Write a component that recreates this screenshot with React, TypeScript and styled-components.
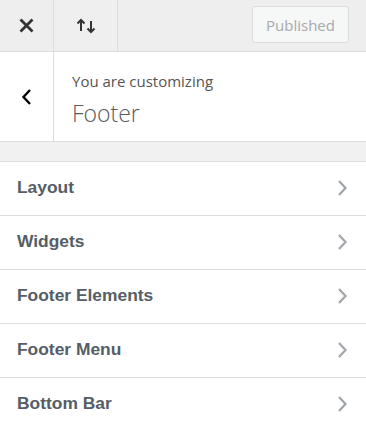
import React from 'react';
import styled, { createGlobalStyle } from 'styled-components';

const GlobalStyle = createGlobalStyle`
  html, body {
    margin: 0;
    padding: 0;
    background: #fff;
  }
  * { box-sizing: border-box; }
`;

const Panel = styled.div`
  width: 366px;
  min-height: 426px;
  background: #fff;
  font-family: 'Open Sans', 'Noto Sans', sans-serif;
`;

const TopBar = styled.div`
  display: flex;
  align-items: stretch;
  height: 52px;
  background: #eeeeee;
  border-bottom: 1px solid #dddddd;
`;

const IconButton = styled.button<{ $width: number; $shade?: boolean }>`
  width: ${(p) => p.$width}px;
  border: none;
  border-right: 1px solid #dddddd;
  background: ${(p) => (p.$shade ? '#efefef' : 'transparent')};
  padding: 0;
  display: flex;
  align-items: center;
  justify-content: center;
  color: #333;
  cursor: pointer;
`;

const Spacer = styled.div`
  flex: 1;
`;

const PublishButton = styled.button`
  align-self: center;
  margin-right: 17px;
  margin-top: -2px;
  width: 97px;
  height: 37px;
  border: 1px solid #dcdcde;
  border-radius: 3px;
  background: #f6f7f7;
  color: #a7aaad;
  font-family: 'Open Sans', 'Noto Sans', sans-serif;
  font-size: 15px;
  padding: 0;
`;

const Header = styled.div`
  display: flex;
  height: 90px;
  border-bottom: 1px solid #dddddd;
`;

const BackButton = styled.button`
  width: 54px;
  border: none;
  border-right: 1px solid #dddddd;
  background: #fff;
  display: flex;
  align-items: center;
  justify-content: center;
  padding: 0;
  color: #000;
`;

const HeaderText = styled.div`
  display: flex;
  flex-direction: column;
  justify-content: center;
  padding: 5px 0 0 18px;
  gap: 7px;
`;

const Label = styled.span`
  font-size: 15px;
  color: #555;
  line-height: 20px;
`;

const Title = styled.span`
  font-size: 23px;
  font-weight: 300;
  color: #5a5a5a;
  line-height: 30px;
`;

const Gap = styled.div`
  height: 20px;
  background: #f1f1f1;
  border-bottom: 1px solid #dddddd;
`;

const List = styled.ul`
  list-style: none;
  margin: 0;
  padding: 0;
`;

const Item = styled.li`
  display: flex;
  align-items: center;
  justify-content: space-between;
  height: 54px;
  padding: 0 18px 2px 17px;
  border-bottom: 1px solid #dddddd;
  font-family: 'Liberation Sans', Arial, sans-serif;
  font-weight: 700;
  font-size: 17.4px;
  color: #555d66;
`;

const Chevron = () => (
  <svg width="12" height="18" viewBox="0 0 12 18">
    <path d="M3 2 L9.5 9 L3 16" fill="none" stroke="#a0a5aa" strokeWidth="2.2" />
  </svg>
);

const items = ['Layout', 'Widgets', 'Footer Elements', 'Footer Menu', 'Bottom Bar'];

export default function App() {
  return (
    <>
      <GlobalStyle />
      <Panel>
        <TopBar>
          <IconButton $width={54} aria-label="Close">
            <svg width="15" height="15" viewBox="0 0 15 15">
              <path d="M1.5 1.5 L13.5 13.5 M13.5 1.5 L1.5 13.5" stroke="#333" strokeWidth="2.8" />
            </svg>
          </IconButton>
          <IconButton $width={64} $shade aria-label="Reorder">
            <svg width="22" height="18" viewBox="0 0 22 18">
              <path d="M6 14 V3 M2.5 6.5 L6 3 L9.5 6.5" fill="none" stroke="#333" strokeWidth="2" />
              <path d="M16 4 V15 M12.5 11.5 L16 15 L19.5 11.5" fill="none" stroke="#333" strokeWidth="2" />
            </svg>
          </IconButton>
          <Spacer />
          <PublishButton disabled>Published</PublishButton>
        </TopBar>
        <Header>
          <BackButton aria-label="Back">
            <svg width="12" height="18" viewBox="0 0 12 18">
              <path d="M9 2 L2.5 9 L9 16" fill="none" stroke="#000" strokeWidth="2.4" />
            </svg>
          </BackButton>
          <HeaderText>
            <Label>You are customizing</Label>
            <Title>Footer</Title>
          </HeaderText>
        </Header>
        <Gap />
        <List>
          {items.map((name) => (
            <Item key={name}>
              {name}
              <Chevron />
            </Item>
          ))}
        </List>
      </Panel>
    </>
  );
}
